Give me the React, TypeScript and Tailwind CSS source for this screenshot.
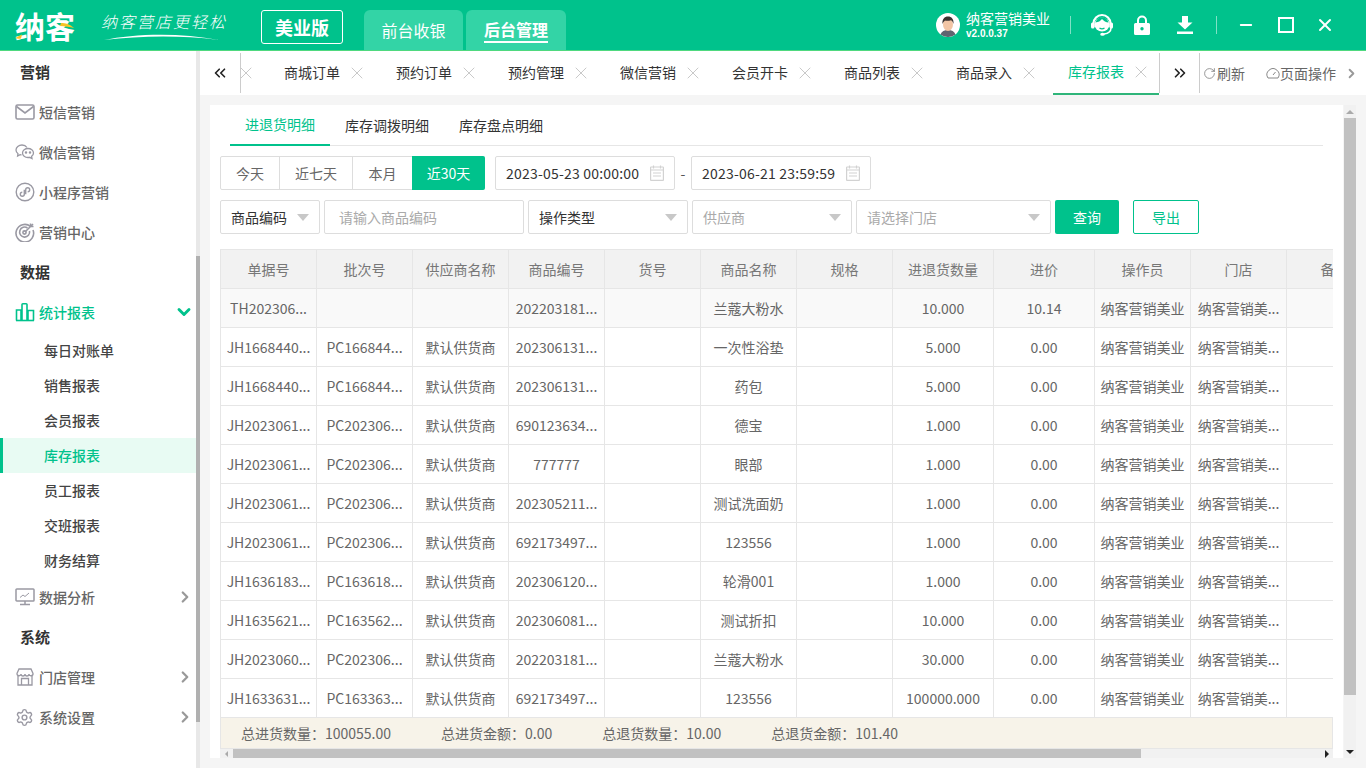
import { ChevronDown, ChevronRight, ChevronsLeft, ChevronsRight, RotateCw, Settings, X, Minus } from 'lucide-react';

const FONT = '[font-family:"Noto_Sans_CJK_SC","Open_Sans",sans-serif]';

const pageTabs = ['商城订单', '预约订单', '预约管理', '微信营销', '会员开卡', '商品列表', '商品录入', '库存报表'];

const columns = [
  { label: '单据号', w: 'w-[96px]' },
  { label: '批次号', w: 'w-[96px]' },
  { label: '供应商名称', w: 'w-[96px]' },
  { label: '商品编号', w: 'w-[96px]' },
  { label: '货号', w: 'w-[96px]' },
  { label: '商品名称', w: 'w-[96px]' },
  { label: '规格', w: 'w-[96px]' },
  { label: '进退货数量', w: 'w-[101px]' },
  { label: '进价', w: 'w-[101px]' },
  { label: '操作员', w: 'w-[96px]' },
  { label: '门店', w: 'w-[96px]' },
  { label: '备注', w: 'w-[96px]' },
];

const rows = [
  ['TH202306...', '', '', '202203181...', '', '兰蔻大粉水', '', '10.000', '10.14'],
  ['JH1668440...', 'PC166844...', '默认供货商', '202306131...', '', '一次性浴垫', '', '5.000', '0.00'],
  ['JH1668440...', 'PC166844...', '默认供货商', '202306131...', '', '药包', '', '5.000', '0.00'],
  ['JH2023061...', 'PC202306...', '默认供货商', '690123634...', '', '德宝', '', '1.000', '0.00'],
  ['JH2023061...', 'PC202306...', '默认供货商', '777777', '', '眼部', '', '1.000', '0.00'],
  ['JH2023061...', 'PC202306...', '默认供货商', '202305211...', '', '测试洗面奶', '', '1.000', '0.00'],
  ['JH2023061...', 'PC202306...', '默认供货商', '692173497...', '', '123556', '', '1.000', '0.00'],
  ['JH1636183...', 'PC163618...', '默认供货商', '202306120...', '', '轮滑001', '', '1.000', '0.00'],
  ['JH1635621...', 'PC163562...', '默认供货商', '202306081...', '', '测试折扣', '', '10.000', '0.00'],
  ['JH2023060...', 'PC202306...', '默认供货商', '202203181...', '', '兰蔻大粉水', '', '30.000', '0.00'],
  ['JH1633631...', 'PC163363...', '默认供货商', '692173497...', '', '123556', '', '100000.000', '0.00'],
];

const MailIcon = () => (
  <svg width="20" height="16" viewBox="0 0 20 16" fill="none" stroke="#9a99a3" strokeWidth="1.6">
    <rect x="1" y="1" width="18" height="14" rx="1.5" />
    <path d="M1.5 2.5 10 9l8.500-6.500" />
  </svg>
);

const WechatIcon = () => (
  <svg width="20" height="16" viewBox="0 0 20 16" fill="none" stroke="#9a99a3" strokeWidth="1.3">
    <path d="M12 3.500C11 2 9.200 1 7 1 3.700 1 1 3.200 1 6c0 1.500.8 2.800 2 3.700L2.600 12l2.500-1.300c.5.100 1 .2 1.500.2" />
    <path d="M13 4.500c-3 0-5.500 2-5.500 4.500s2.500 4.500 5.500 4.500c.6 0 1.200-.1 1.700-.2l2.300 1.200-.4-2.200c1.200-.8 1.900-2 1.900-3.300 0-2.500-2.500-4.500-5.500-4.500Z" />
    <circle cx="11" cy="8.500" r=".6" fill="#9a99a3" />
    <circle cx="15" cy="8.500" r=".6" fill="#9a99a3" />
  </svg>
);

const MiniIcon = () => (
  <svg width="20" height="20" viewBox="0 0 20 20" fill="none" stroke="#9a99a3" strokeWidth="1.4">
    <circle cx="10" cy="10" r="8.800" />
    <path d="M9.300 7.700v4.600a2 2 0 1 1-2-2M10.700 12.300V7.700a2 2 0 1 1 2 2" />
  </svg>
);

const TargetIcon = () => (
  <svg width="20" height="20" viewBox="0 0 20 20" fill="none" stroke="#9a99a3" strokeWidth="1.6">
    <path d="M15.500 4.500A8.800 8.800 0 1 0 18 8" />
    <path d="M12.500 6a5 5 0 1 0 2 3" />
    <circle cx="9.500" cy="10.500" r="1.600" />
    <path d="M10 10 18 2M15.500 1.500v3h3" />
  </svg>
);

const BarsIcon = () => (
  <svg width="20" height="20" viewBox="0 0 20 20" fill="none" stroke="#00c28c" strokeWidth="1.600">
    <path d="M1 18.500h18" />
    <path d="M1.500 18.500V8h4.500v10.500M7 18.500V2.500a.8.8 0 0 1 .8-.8h3.400a.8.800 0 0 1 .8.800v16M13 18.500V8.500h5.500v10" />
  </svg>
);

const MonitorIcon = () => (
  <svg width="20" height="18" viewBox="0 0 20 18" fill="none" stroke="#9a99a3" strokeWidth="1.500">
    <rect x="1" y="1" width="18" height="12" rx=".8" />
    <path d="M10 13v3M5 16.500h10" />
    <path d="M5 9.500 8 7l2 1.500L14 5" strokeWidth="1" />
  </svg>
);

const StoreIcon = () => (
  <svg className="ml-[1px]" width="18" height="18" viewBox="0 0 18 18" fill="none" stroke="#9a99a3" strokeWidth="1.300">
    <path d="M3 1h12l2 4.500a2 2 0 0 1-4 .5 2 2 0 0 1-4 0 2 2 0 0 1-4 0 2 2 0 0 1-4-.5L3 1Z" />
    <path d="M2 8v9h14V8M5.500 17v-6.500h7V17" />
  </svg>
);

const CalendarIcon = () => (
  <svg width="14" height="16" viewBox="0 0 14 16" fill="none" stroke="#d2d2d2" strokeWidth="1.200">
    <rect x=".6" y="2" width="12.800" height="13.400" rx=".5" />
    <path d="M3.500 .5v3M10.500 .5v3M.6 5h12.800M3 8h8M3 11h8" />
  </svg>
);

const HeadsetIcon = () => (
  <svg width="22" height="24" viewBox="0 0 22 24" fill="none">
    <path d="M2.500 14V10.500a8.500 8.500 0 0 1 17 0V14" stroke="white" strokeWidth="2.200" />
    <ellipse cx="11" cy="11.500" rx="7.500" ry="7" fill="white" />
    <path d="M4.500 9.500c3-.3 5-1.500 6.500-3.500 1.500 2 4 3.300 6.500 3.500C16.500 6 14 4.300 11 4.300S5.500 6 4.500 9.500Z" fill="#00c28c" />
    <path d="M8.500 15c1.500 1 3.500 1 5 0" stroke="#00c28c" strokeWidth="1.300" />
    <rect x="0" y="9.500" width="3.500" height="6" rx="1.500" fill="white" />
    <rect x="18.500" y="9.500" width="3.500" height="6" rx="1.500" fill="white" />
    <path d="M20 15c0 3.500-3 5.500-7 6" stroke="white" strokeWidth="1.500" />
    <ellipse cx="11.500" cy="21.300" rx="2.300" ry="1.500" fill="white" />
  </svg>
);

const LockIcon = () => (
  <svg width="16" height="20" viewBox="0 0 16 20" fill="white">
    <path fillRule="evenodd" d="M3 8V5.500a5 5 0 0 1 10 0V8h1.500A1.500 1.500 0 0 1 16 9.500v9a1.500 1.500 0 0 1-1.500 1.500h-13A1.500 1.500 0 0 1 0 18.500v-9A1.500 1.500 0 0 1 1.500 8H3Zm2 0h6V5.500a3 3 0 0 0-6 0V8Zm3 4a1.700 1.700 0 1 0 0 3.400A1.700 1.700 0 0 0 8 12Z" />
  </svg>
);

const DownloadIcon = () => (
  <svg width="16" height="18" viewBox="0 0 16 18" fill="white">
    <path d="M5 0h6v6.500h4.500L8 13.500.5 6.500H5V0ZM0 15.500h16V18H0v-2.500Z" />
  </svg>
);

const Avatar = () => (
  <svg width="24" height="24" viewBox="0 0 24 24">
    <circle cx="12" cy="12" r="12" fill="white" />
    <path d="M4.500 21.500c1-3.200 4-4.500 7.500-4.500s6.500 1.300 7.500 4.500A12 12 0 0 1 12 24a12 12 0 0 1-7.500-2.500Z" fill="#5f6470" />
    <ellipse cx="12" cy="11.500" rx="5" ry="6.500" fill="#f2c5a5" />
    <path d="M6.500 11C6 6 8.500 3.500 12 3.500s6 2.500 5.500 7.500c-.5-2-1.500-3.500-2.500-3.800-2 .8-5 .8-6 .3-1 .7-2 2-2.500 3.500Z" fill="#3a3230" />
  </svg>
);

const Logo = () => (
  <div className="flex items-center gap-[26px] w-[211px] shrink-0 ml-[15px] h-[50px]">
    <div className="relative w-[60px] h-[32px] shrink-0">
      <span className="block text-[30px] leading-[32px] font-bold text-white whitespace-nowrap">纳客</span>
      <svg className="absolute left-0 top-0" width="60" height="32" viewBox="0 0 60 32" fill="none">
        <path d="M0 29c2-1 5-2.500 7-3.500L6 29.500c-2 .3-4.500.3-6-.5Z" fill="#f7c325" />
        <path d="M46 14c4 0 9 1 13 5-4-1-9-2-14-2Z" fill="#f7c325" />
      </svg>
    </div>
    <div className="relative w-[125px] h-[32px]">
      <span className="block text-[16px] leading-[24px] italic font-light text-white whitespace-nowrap tracking-[2px]">纳客营店更轻松</span>
      <svg className="absolute left-[2px] top-[24px]" width="117" height="8" viewBox="0 0 117 8" fill="none">
        <path d="M1 7C30 1 75-1 116 7 75 2 38 3 1 7Z" fill="white" />
      </svg>
    </div>
  </div>
);

const Header = () => (
  <header className="h-[51px] shrink-0 flex bg-[#00c28c] border-b border-[#4fd97f] text-white">
    <Logo />
    <div className="ml-[35px] mt-[10px] w-[82px] h-[34px] border border-white rounded-[3px] flex items-center justify-center text-[18px] font-bold">美业版</div>
    <div className="ml-[21px] mt-[10px] flex gap-[3px]">
      <div className="w-[99px] h-[40px] rounded-t-[6px] bg-[#33d4a6] flex items-center justify-center text-[16px]">前台收银</div>
      <div className="w-[100px] h-[40px] rounded-t-[6px] bg-[#33d4a6] flex items-center justify-center">
        <span className="text-[16px] font-bold leading-[24px] border-b-2 border-white">后台管理</span>
      </div>
    </div>
    <div className="ml-[370px] flex items-center h-[50px]">
      <Avatar />
      <div className="ml-[6px] w-[104px]">
        <div className="text-[14px] leading-[18px] whitespace-nowrap">纳客营销美业</div>
        <div className="text-[10px] leading-[14px] font-bold [font-family:'Liberation_Sans',sans-serif]">v2.0.0.37</div>
      </div>
      <div className="w-px h-[18px] bg-white/50" />
      <div className="ml-[20px] w-[22px] flex justify-center"><HeadsetIcon /></div>
      <div className="ml-[21px] w-[16px] flex justify-center"><LockIcon /></div>
      <div className="ml-[27px] w-[16px] flex justify-center"><DownloadIcon /></div>
      <div className="ml-[23px] w-px h-[18px] bg-white/50" />
      <Minus className="ml-[20px]" size={18} strokeWidth={2.4} />
      <div className="ml-[23px] w-[16px] h-[16px] border-[2.500px] border-white" />
      <X className="ml-[21px]" size={20} strokeWidth={2.4} />
    </div>
  </header>
);

const MenuTitle = ({ label }: { label: string }) => (
  <div className="h-10 flex items-center pl-[20px] text-[15px] font-bold text-[#333]">{label}</div>
);

const MenuItem = ({ icon, label, more }: { icon: React.ReactNode; label: string; more?: boolean }) => (
  <div className="h-10 flex items-center text-[14px] font-medium text-[#666]">
    <span className="w-[39px] pl-[15px] flex justify-start shrink-0">{icon}</span>
    <span className="whitespace-nowrap">{label}</span>
    {more && <ChevronRight className="ml-auto mr-[2px] text-[#999]" size={18} strokeWidth={3} />}
  </div>
);

const subMenu = ['每日对账单', '销售报表', '会员报表', '库存报表', '员工报表', '交班报表', '财务结算'];

const Sidebar = () => (
  <aside className="w-[200px] shrink-0 flex bg-white">
    <div className="w-[196px] pt-[1px]">
      <MenuTitle label="营销" />
      <MenuItem icon={<MailIcon />} label="短信营销" />
      <MenuItem icon={<WechatIcon />} label="微信营销" />
      <MenuItem icon={<MiniIcon />} label="小程序营销" />
      <MenuItem icon={<TargetIcon />} label="营销中心" />
      <MenuTitle label="数据" />
      <div className="h-10 flex items-center text-[14px] font-medium text-[#00c28c]">
        <span className="w-[39px] pl-[15px] shrink-0"><BarsIcon /></span>
        <span>统计报表</span>
        <ChevronDown className="ml-auto mr-[2px]" size={20} strokeWidth={3.500} />
      </div>
      <div className="pt-[1px] -mb-[1px]">
        {subMenu.map((item) =>
          item === '库存报表' ? (
            <div key={item} className="h-[35px] flex items-center pl-[41px] border-l-[3px] border-[#00c28c] bg-[#e8fbf3] text-[14px] font-medium text-[#00c28c]">{item}</div>
          ) : (
            <div key={item} className="h-[35px] flex items-center pl-[44px] text-[14px] font-medium text-[#444]">{item}</div>
          ),
        )}
      </div>
      <MenuItem icon={<MonitorIcon />} label="数据分析" more />
      <MenuTitle label="系统" />
      <MenuItem icon={<StoreIcon />} label="门店管理" more />
      <MenuItem icon={<Settings size={19} strokeWidth={1.800} className="text-[#9a99a3]" />} label="系统设置" more />
    </div>
    <div className="w-[4px] bg-[#e8e8e8]">
      <div className="mt-[205px] h-[466px] bg-[#b0b0b0]" />
    </div>
  </aside>
);

const TabBar = () => (
  <div className="h-[44px] shrink-0 flex bg-white text-[14px] text-[#333]">
    <div className="w-[41px] h-[40px] mt-[2px] flex items-center justify-center border-r border-[#ccc]">
      <ChevronsLeft size={18} strokeWidth={2.200} className="text-[#222]" />
    </div>
    <div className="w-[28px] h-[44px] flex items-center overflow-hidden shrink-0">
      <X size={20} strokeWidth={1.100} className="text-[#c4c4c4] -ml-[5px] shrink-0" />
    </div>
    {pageTabs.map((t) => {
      const active = t === '库存报表';
      return (
        <div
          key={t}
          className={
            active
              ? 'w-[106px] h-[44px] flex items-center pl-[15px] shrink-0 text-[#00c28c] border-b-2 border-[#2fb57a] pb-[1px]'
              : 'w-[106px] mr-[6px] h-[44px] flex items-center pl-[15px] shrink-0 pb-[1px]'
          }
        >
          <span className="w-[56px] whitespace-nowrap">{t}</span>
          <X size={20} strokeWidth={1.100} className="ml-[7px] text-[#c4c4c4]" />
        </div>
      );
    })}
    <div className="w-[41px] h-[40px] mt-[2px] flex items-center justify-center border-x border-[#ccc]">
      <ChevronsRight size={18} strokeWidth={2.200} className="text-[#222]" />
    </div>
    <div className="flex items-center text-[#666] h-[44px] whitespace-nowrap">
      <RotateCw size={13} strokeWidth={1.400} className="ml-[3px] text-[#777]" />
      <span className="ml-[1px]">刷新</span>
      <svg className="ml-[21px]" width="14" height="12" viewBox="0 0 14 12" fill="none" stroke="#888" strokeWidth="1">
        <path d="M2 11a6 6 0 1 1 10 0H2ZM7 8l2.500-3" />
      </svg>
      <span>页面操作</span>
      <ChevronRight size={15} strokeWidth={3} className="ml-[8px] text-[#999]" />
    </div>
  </div>
);

const Arrow = () => (
  <span className="w-0 h-0 border-x-[6px] border-x-transparent border-t-[7px] border-t-[#c8c8c8]" />
);

const FilterTabs = () => (
  <div className="h-[41px] ml-[20px] mr-[20px] flex text-[14px] text-[#333] border-b border-[#e6e6e6]">
    <div className="w-[100px] h-[41px] border-b-2 border-[#00c28c] text-[#00c28c] flex items-center justify-center">进退货明细</div>
    <div className="ml-[15px] h-[41px] flex items-center">库存调拨明细</div>
    <div className="ml-[30px] h-[41px] flex items-center">库存盘点明细</div>
  </div>
);

const DateBox = ({ value }: { value: string }) => (
  <div className="w-[180px] h-[34px] border border-[#ddd] rounded-[2px] flex items-center justify-between pl-[10px] pr-[10px] text-[14px] text-[#333] tracking-[.2px]">
    <span className="whitespace-nowrap">{value}</span>
    <CalendarIcon />
  </div>
);

const DateFilter = () => (
  <div className="mt-[10px] ml-[10px] flex items-center">
    <div className="flex h-[34px] w-[265px] border border-[#ddd] rounded-[2px] text-[14px] text-[#666]">
      <div className="w-[59px] flex items-center justify-center border-r border-[#ddd]">今天</div>
      <div className="w-[73px] flex items-center justify-center border-r border-[#ddd]">近七天</div>
      <div className="w-[59px] flex items-center justify-center">本月</div>
      <div className="flex-1 -my-px -mr-px rounded-r-[2px] flex items-center justify-center bg-[#00c28c] text-white">近30天</div>
    </div>
    <div className="ml-[10px]"><DateBox value="2023-05-23 00:00:00" /></div>
    <span className="w-[16px] text-center text-[14px] text-[#555]">-</span>
    <DateBox value="2023-06-21 23:59:59" />
  </div>
);

const SelectBox = ({ label, w, muted }: { label: string; w: string; muted?: boolean }) => (
  <div className={`${w} h-[34px] border border-[#ddd] rounded-[2px] flex items-center justify-between pl-[10px] pr-[10px] text-[14px] ${muted ? 'text-[#aaa]' : 'text-[#333]'}`}>
    <span className="whitespace-nowrap">{label}</span>
    <Arrow />
  </div>
);

const QueryFilter = () => (
  <div className="mt-[10px] ml-[10px] flex items-center gap-[4px]">
    <SelectBox label="商品编码" w="w-[100px]" />
    <div className="w-[200px] h-[34px] border border-[#ddd] rounded-[2px] flex items-center pl-[14px] text-[14px] text-[#aaa]">请输入商品编码</div>
    <SelectBox label="操作类型" w="w-[160px]" />
    <SelectBox label="供应商" w="w-[160px]" muted />
    <SelectBox label="请选择门店" w="w-[195px]" muted />
    <div className="w-[64px] h-[34px] rounded-[2px] bg-[#00c28c] text-white text-[14px] flex items-center justify-center">查询</div>
    <div className="ml-[10px] w-[66px] h-[34px] rounded-[2px] border border-[#00c28c] text-[#00c28c] text-[14px] flex items-center justify-center">导出</div>
  </div>
);

const Cell = ({ w, children, head }: { w: string; children?: React.ReactNode; head?: boolean }) => (
  <div className={`${w} shrink-0 h-full flex items-center justify-center border-r border-[#e6e6e6] whitespace-nowrap overflow-hidden text-[14px] ${head ? 'text-[#777]' : 'text-[#666]'}`}>
    {children}
  </div>
);

const DataTable = () => (
  <div className="mt-[15px] ml-[10px] w-[1113px] overflow-hidden">
    <div className="flex w-max h-[40px] bg-[#f2f2f2] border-y border-l border-[#e6e6e6]">
      {columns.map((c) => (
        <Cell key={c.label} w={c.w} head>{c.label}</Cell>
      ))}
    </div>
    {rows.map((row, i) => (
      <div key={i} className={`flex w-max h-[39px] border-b border-l border-[#e6e6e6] ${i === 0 ? 'bg-[#f9f9f9]' : 'bg-white'}`}>
        {columns.map((c, j) => (
          <Cell key={c.label} w={c.w}>
            {j < 9 ? row[j] : j === 9 ? '纳客营销美业' : j === 10 ? '纳客营销美...' : ''}
          </Cell>
        ))}
      </div>
    ))}
    <div className="h-[31px] flex items-center bg-[#f7f3e9] border-x border-b border-[#e6e6e6] text-[14px] text-[#666] whitespace-nowrap">
      <span className="ml-[20px]">总进货数量：100055.00</span>
      <span className="ml-[50px]">总进货金额：0.00</span>
      <span className="ml-[50px]">总退货数量：10.00</span>
      <span className="ml-[50px]">总退货金额：101.40</span>
    </div>
    <div className="h-[10px] flex items-center bg-[#f1f1f1]">
      <span className="w-[13px] flex justify-center">
        <span className="w-0 h-0 border-y-[3px] border-y-transparent border-r-[3px] border-r-[#aaa]" />
      </span>
      <div className="w-[908px] h-[10px] bg-[#c1c1c1]" />
      <span className="ml-auto w-[13px] flex justify-center">
        <span className="w-0 h-0 border-y-[4px] border-y-transparent border-l-[4px] border-l-[#222]" />
      </span>
    </div>
  </div>
);

const VScroll = () => (
  <div className="w-[12px] h-full ml-[1px] flex flex-col items-center bg-[#f1f1f1]">
    <div className="h-[13px] w-full flex items-center justify-center">
      <span className="w-0 h-0 border-x-[4px] border-x-transparent border-b-[4px] border-b-[#aaa]" />
    </div>
    <div className="h-[577px] w-full bg-[#c1c1c1]" />
    <div className="mt-auto h-[13px] w-full flex items-center justify-center">
      <span className="w-0 h-0 border-x-[4px] border-x-transparent border-t-[4px] border-t-[#222]" />
    </div>
  </div>
);

export default function App() {
  return (
    <div className={`${FONT} w-[1366px] h-[768px] overflow-hidden flex flex-col bg-[#f5f5f5]`}>
      <Header />
      <div className="flex-1 flex min-h-0">
        <Sidebar />
        <main className="flex-1 flex flex-col min-w-0">
          <TabBar />
          <div className="flex-1 flex pt-[10px] pb-[10px] pl-[10px] min-h-0">
            <div className="w-[1133px] bg-white overflow-hidden">
              <FilterTabs />
              <DateFilter />
              <QueryFilter />
              <DataTable />
            </div>
            <VScroll />
          </div>
        </main>
      </div>
    </div>
  );
}
